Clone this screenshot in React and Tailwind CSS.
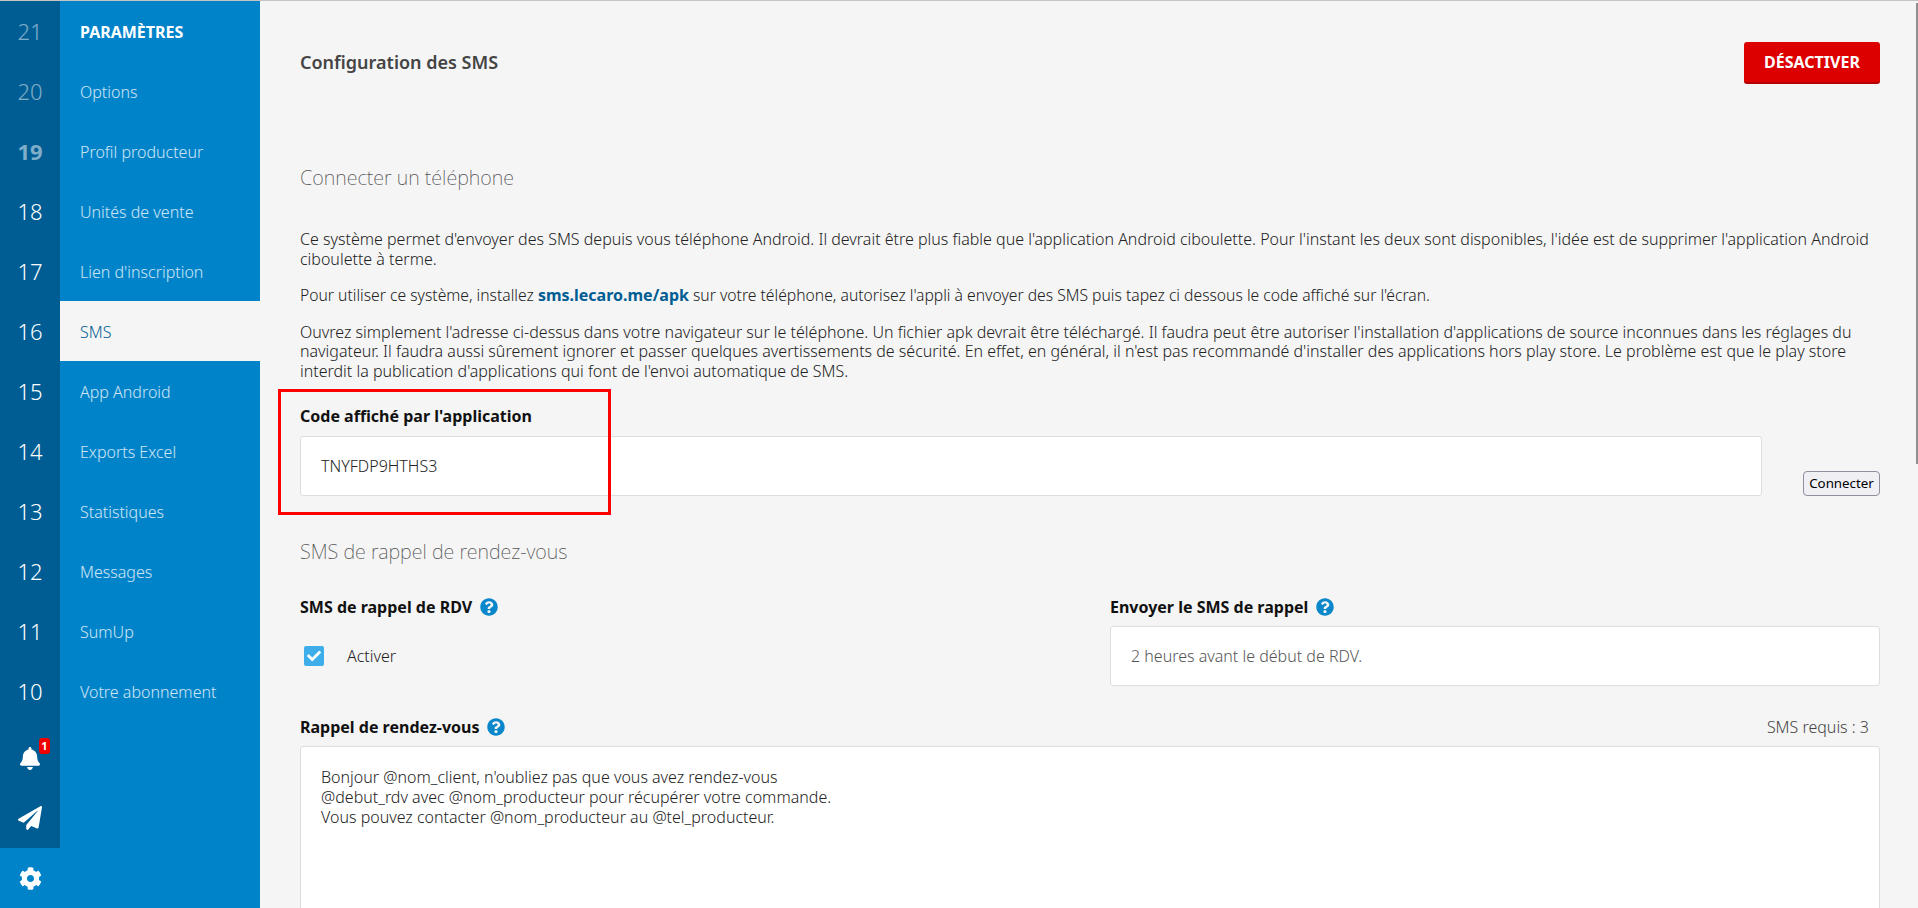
import { FaBell, FaPaperPlane, FaCog, FaQuestionCircle, FaCheck } from "react-icons/fa";

const years = [
  { n: "21", cls: "font-light text-white/50" },
  { n: "20", cls: "font-light text-white/50" },
  { n: "19", cls: "font-bold text-white/50" },
  { n: "18", cls: "font-light text-white" },
  { n: "17", cls: "font-light text-white" },
  { n: "16", cls: "font-light text-white" },
  { n: "15", cls: "font-light text-white" },
  { n: "14", cls: "font-light text-white" },
  { n: "13", cls: "font-light text-white" },
  { n: "12", cls: "font-light text-white" },
  { n: "11", cls: "font-light text-white" },
  { n: "10", cls: "font-light text-white" },
];

const menu = [
  "Options",
  "Profil producteur",
  "Unités de vente",
  "Lien d'inscription",
  "SMS",
  "App Android",
  "Exports Excel",
  "Statistiques",
  "Messages",
  "SumUp",
  "Votre abonnement",
];

function Help() {
  return <FaQuestionCircle className="inline-block w-[18px] h-[18px] text-[#0a87cb] ml-2 align-[-3px]" />;
}

export default function App() {
  return (
    <div className="relative h-[908px] w-[1918px] overflow-hidden flex flex-col bg-[#f5f5f5] font-['Noto_Sans',sans-serif] text-[16px] text-[#222]">
      <div className="h-px bg-[#c4c4c4] shrink-0" />
      <div className="flex flex-1 min-h-0">
        {/* Years */}
        <div className="w-[60px] shrink-0 bg-[#0083c9] flex flex-col">
          <div className="bg-[#005d94] h-[847px] flex flex-col">
            {years.map((y) => (
              <div key={y.n} className={`h-[60px] flex items-center justify-center text-[22px] ${y.cls}`}>
                {y.n}
              </div>
            ))}
            <div className="h-[60px] mt-[7px] flex items-center justify-center relative">
              <FaBell className="w-[20px] h-[23px] text-white" />
              <span className="absolute left-[39px] top-[10px] w-[11px] h-[16px] bg-[#f00000] rounded-[3px] text-white text-[11px] font-bold flex items-center justify-center">1</span>
            </div>
            <div className="h-[60px] flex items-center justify-center">
              <FaPaperPlane className="w-[24px] h-[24px] text-white" />
            </div>
          </div>
          <div className="flex-1 flex items-center justify-center">
            <FaCog className="w-[23px] h-[23px] text-white" />
          </div>
        </div>

        {/* Menu */}
        <div className="w-[200px] shrink-0 bg-[#0083c9]">
          <div className="h-[60px] flex items-center pl-5 pt-px text-white font-bold uppercase">Paramètres</div>
          {menu.map((m) => (
            <div
              key={m}
              className={`h-[60px] flex items-center pl-5 pt-px font-light ${m === "SMS" ? "bg-[#f5f5f5] text-[#005d94]" : "text-white/80"}`}
            >
              {m}
            </div>
          ))}
        </div>

        {/* Main */}
        <div className="flex-1 min-w-0 pl-10 pr-[38px] relative font-light">
          <div className="flex items-center justify-between mt-[41px] h-[42px]">
            <h1 className="font-semibold text-[#444] text-[18px] -mt-px">Configuration des SMS</h1>
            <button className="h-[42px] w-[136px] bg-[#dc0000] border-b-2 border-[#b60000] rounded-[3px] text-white font-bold uppercase">
              Désactiver
            </button>
          </div>

          <h2 className="mt-[80px] font-extralight text-[19.75px] text-[#555] leading-[28px]">Connecter un téléphone</h2>

          <p className="mt-[38px] leading-[19.5px]">
            Ce système permet d'envoyer des SMS depuis vous téléphone Android. Il devrait être plus fiable que l'application Android ciboulette. Pour l'instant les deux sont disponibles, l'idée est de supprimer l'application Android ciboulette à terme.
          </p>
          <p className="mt-[17px] leading-[19.5px] text-[15.7px]">
            Pour utiliser ce système, installez <a className="font-bold text-[16px] text-[#005d94]">sms.lecaro.me/apk</a> sur votre téléphone, autorisez l'appli à envoyer des SMS puis tapez ci dessous le code affiché sur l'écran.
          </p>
          <p className="mt-[17px] leading-[19.5px]">
            Ouvrez simplement l'adresse ci-dessus dans votre navigateur sur le téléphone. Un fichier apk devrait être téléchargé. Il faudra peut être autoriser l'installation d'applications de source inconnues dans les réglages du navigateur. Il faudra aussi sûrement ignorer et passer quelques avertissements de sécurité. En effet, en général, il n'est pas recommandé d'installer des applications hors play store. Le problème est que le play store interdit la publication d'applications qui font de l'envoi automatique de SMS.
          </p>

          <div className="flex items-end justify-between mt-[25px]">
            <div className="w-[1462px]">
              <div className="font-bold text-[#111] leading-[20px] mb-[10px]">Code affiché par l'application</div>
              <div className="h-[60px] bg-white border border-[#ddd] rounded-[3px] flex items-center px-5">TNYFDP9HTHS3</div>
            </div>
            <button className="h-[25px] w-[77px] text-[13.33px] leading-none bg-[#efeff4] border border-[#8f8f9d] rounded-[4px] text-black font-normal">Connecter</button>
          </div>
          <div className="absolute left-[18px] top-[388px] w-[333px] h-[126px] border-[3px] border-[#ff0000] pointer-events-none" />

          <h2 className="mt-[42px] font-extralight text-[19.75px] text-[#555] leading-[28px]">SMS de rappel de rendez-vous</h2>

          <div className="grid grid-cols-2 gap-x-[40px] mt-[29px]">
            <div>
              <div className="font-bold text-[#111] leading-[24px]">SMS de rappel de RDV<Help /></div>
              <div className="flex items-center h-[60px] mt-[7px] pl-1">
                <span className="w-5 h-5 rounded-[2px] bg-[#3daee9] flex items-center justify-center">
                  <FaCheck className="w-[14px] h-[14px] text-white" />
                </span>
                <span className="ml-[23px]">Activer</span>
              </div>
            </div>
            <div>
              <div className="font-bold text-[#111] leading-[24px]">Envoyer le SMS de rappel<Help /></div>
              <div className="h-[60px] mt-[7px] bg-white border border-[#ddd] rounded-[3px] flex items-center px-5 text-[#555]">2 heures avant le début de RDV.</div>
            </div>
          </div>

          <div className="flex items-center justify-between mt-[29px] h-[24px]">
            <div className="font-bold text-[#111]">Rappel de rendez-vous<Help /></div>
            <div className="text-[#444] pr-[11px]">SMS requis : 3</div>
          </div>
          <div className="mt-[7px] h-[200px] bg-white border border-[#ddd] rounded-[3px] px-5 py-[20px] leading-[20px]">
            Bonjour @nom_client, n'oubliez pas que vous avez rendez-vous<br />
            @debut_rdv avec @nom_producteur pour récupérer votre commande.<br />
            Vous pouvez contacter @nom_producteur au @tel_producteur.
          </div>
        </div>
      </div>
      <div className="absolute right-0 top-[3px] w-[2px] h-[461px] bg-[#8e8e8e]" />
    </div>
  );
}
